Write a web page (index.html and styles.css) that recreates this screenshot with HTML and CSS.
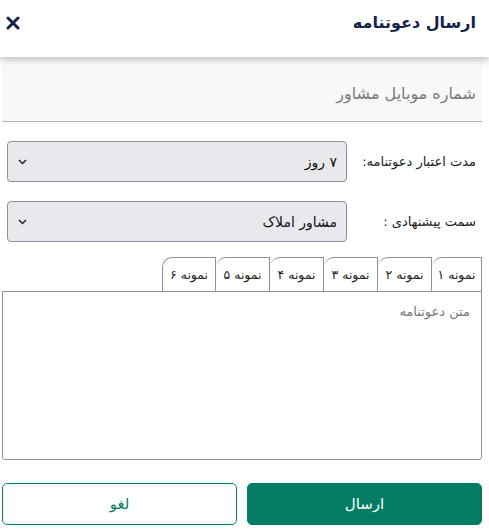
FILE: index.html
```html
<!DOCTYPE html>
<html lang="fa" dir="rtl">
<head>
  <meta charset="UTF-8">
  <meta name="viewport" content="width=device-width, initial-scale=1.0">
  <title>ارسال دعوتنامه</title>
  <link rel="stylesheet" href="styles.css">
</head>
<body>

<div class="header">
  <h2 class="title">ارسال دعوتنامه</h2>
  <button class="close" aria-label="بستن">
    <svg width="14" height="14" viewBox="0 0 14 14">
      <path d="M2 2L12 12M12 2L2 12" stroke="#15244a" stroke-width="3" stroke-linecap="round"/>
    </svg>
  </button>
</div>

<div class="content">
  <div class="mobile">شماره موبایل مشاور</div>

  <div class="row">
    <label class="label">مدت اعتبار دعوتنامه:</label>
    <div class="select">
      <span>۷ روز</span>
      <svg width="9" height="6" viewBox="0 0 9 6"><path d="M1 1L4.5 4.5L8 1" fill="none" stroke="#222" stroke-width="1.5"/></svg>
    </div>
  </div>

  <div class="row">
    <label class="label">سمت پیشنهادی :</label>
    <div class="select">
      <span>مشاور املاک</span>
      <svg width="9" height="6" viewBox="0 0 9 6"><path d="M1 1L4.5 4.5L8 1" fill="none" stroke="#222" stroke-width="1.5"/></svg>
    </div>
  </div>

  <div class="tabs">
    <div class="tab">نمونه ۱</div>
    <div class="tab">نمونه ۲</div>
    <div class="tab">نمونه ۳</div>
    <div class="tab">نمونه ۴</div>
    <div class="tab">نمونه ۵</div>
    <div class="tab">نمونه ۶</div>
  </div>
  <div class="message">متن دعوتنامه</div>

  <div class="actions">
    <button class="btn send">ارسال</button>
    <button class="btn cancel">لغو</button>
  </div>
</div>

</body>
</html>
```

FILE: styles.css
```css
body {
  font-family: "DejaVu Sans", sans-serif;
  margin: 0;
  padding: 0;
  background-color: #fff;
  color: #222;
  width: 489px;
}

.header {
  height: 57px;
  display: flex;
  align-items: center;
  justify-content: space-between;
  padding: 0 13px 0 6px;
  box-shadow: 0 3px 8px rgba(0, 0, 0, 0.28);
  position: relative;
}

.title {
  margin: 0;
  font-size: 16px;
  font-weight: 600;
  color: #15244a;
  margin-top: -12px;
}

.close {
  background: none;
  border: none;
  padding: 0;
  margin-top: -12px;
  display: flex;
}

.content {
  width: 480px;
  margin: 9px 7px 0 2px;
}

.mobile {
  height: 55px;
  background-color: #f8f8f8;
  border-bottom: 1px solid #b5b5b5;
  display: flex;
  align-items: center;
  padding-right: 6px;
  font-size: 16px;
  color: #7a7a7a;
}

.row {
  display: flex;
  align-items: center;
  justify-content: space-between;
  padding: 0 6px 0 5px;
  margin-top: 19px;
}

.label {
  font-size: 13px;
  color: #222;
}

.select {
  width: 340px;
  height: 41px;
  box-sizing: border-box;
  background-color: #e9e9ed;
  border: 1px solid #8f8f9d;
  border-radius: 4px;
  display: flex;
  align-items: center;
  justify-content: space-between;
  padding: 0 9px 0 10px;
  font-size: 14px;
  color: #111;
}

.tabs {
  display: flex;
  margin-top: 15px;
  height: 34px;
}

.tab {
  width: 54px;
  height: 34px;
  box-sizing: border-box;
  border: 1px solid #8f8f9d;
  border-bottom: none;
  border-left: none;
  border-top-left-radius: 10px;
  display: flex;
  align-items: center;
  justify-content: center;
  font-size: 12.5px;
  color: #222;
}

.tab:first-child {
  width: 50px;
}

.tab:last-child {
  border-left: 1px solid #8f8f9d;
}

.message {
  height: 169px;
  box-sizing: border-box;
  border: 1px solid #8f8f9d;
  border-radius: 0 0 3px 3px;
  padding: 12px 11px;
  font-size: 13px;
  color: #777;
}

.actions {
  display: flex;
  justify-content: space-between;
  margin-top: 23px;
}

.btn {
  width: 235px;
  height: 42px;
  border-radius: 5px;
  font-family: "DejaVu Sans", sans-serif;
  font-size: 15px;
  cursor: pointer;
}

.send {
  background-color: #037c63;
  border: 1px solid #037c63;
  color: #fff;
}

.cancel {
  background-color: #fff;
  border: 1px solid #037c63;
  color: #037c63;
}
```
